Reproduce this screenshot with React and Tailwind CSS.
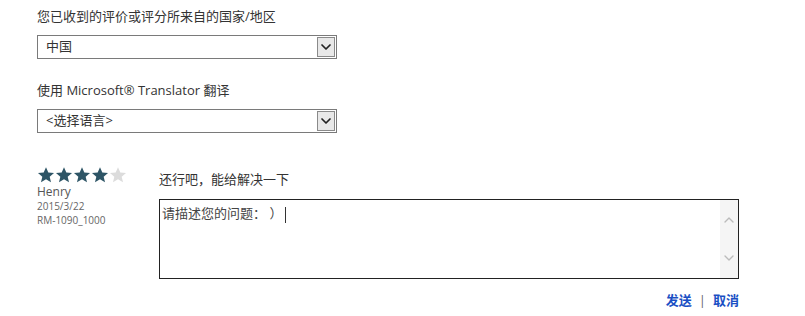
import { ChevronDown, ChevronUp } from 'lucide-react';

const font = { fontFamily: '"Open Sans", "Noto Sans CJK SC", sans-serif' };

function Select({ value }) {
  return (
    <div className="flex h-6 w-[300px] items-center border border-[#7a7a7a] bg-white">
      <span className="flex-1 pl-2 text-[13px] text-[#333]">{value}</span>
      <span className="mr-px flex h-[20px] w-[18px] items-center justify-center border border-[#8a8a8a] bg-[#e8e8e8]">
        <ChevronDown className="h-4 w-4 text-[#222]" strokeWidth={2.6} />
      </span>
    </div>
  );
}

function Star({ filled }) {
  return (
    <svg viewBox="0 0 24 24" className="h-[18px] w-[18px]">
      <path
        d="M12 1.5l3.1 7.1 7.6.6-5.8 5 1.8 7.5L12 17.7l-6.7 4 1.8-7.5-5.8-5 7.6-.6z"
        fill={filled ? '#2e5566' : '#dcdcdc'}
      />
    </svg>
  );
}

export default function App() {
  return (
    <div className="h-[316px] w-[805px] bg-white pl-[37px] pt-[6px]" style={font}>
      <p className="text-[13px] leading-5 text-[#333]">您已收到的评价或评分所来自的国家/地区</p>
      <div className="mt-[9px]">
        <Select value="中国" />
      </div>
      <p className="mt-[21px] text-[13px] leading-5 text-[#333]">使用 Microsoft® Translator 翻译</p>
      <div className="mt-[9px]">
        <Select value="<选择语言>" />
      </div>

      <div className="mt-[33px] flex">
        <div className="w-[122px]">
          <div className="flex">
            {[1, 2, 3, 4, 5].map((i) => (
              <Star key={i} filled={i <= 4} />
            ))}
          </div>
          <p className="text-[12px] leading-[15px] text-[#555]">Henry</p>
          <p className="text-[10px] leading-[14px] text-[#666]">2015/3/22</p>
          <p className="text-[10px] leading-[14px] text-[#666]">RM-1090_1000</p>
        </div>
        <div className="flex flex-col pt-[3px]">
          <p className="text-[13px] leading-5 text-[#333]">还行吧，能给解决一下</p>
          <div className="mt-[10px] flex h-[80px] w-[580px] border border-[#222] bg-white">
            <div className="flex-1 px-[2px] pt-[3px] text-[13px] leading-5 text-[#444]">
              请描述您的问题： ）<span className="ml-[3px] inline-block h-[16px] w-px bg-[#333] align-middle" />
            </div>
            <div className="flex w-[18px] flex-col items-center justify-between bg-[#f5f5f5] py-3">
              <ChevronUp className="h-4 w-4 text-[#bbb]" strokeWidth={2} />
              <ChevronDown className="h-4 w-4 text-[#bbb]" strokeWidth={2} />
            </div>
          </div>
          <div className="mt-[11px] flex justify-end text-[13px] font-bold leading-5">
            <span className="text-[#1a4fc4]">发送</span>
            <span className="mx-[7px] font-normal text-[#666]">|</span>
            <span className="text-[#1a4fc4]">取消</span>
          </div>
        </div>
      </div>
    </div>
  );
}
